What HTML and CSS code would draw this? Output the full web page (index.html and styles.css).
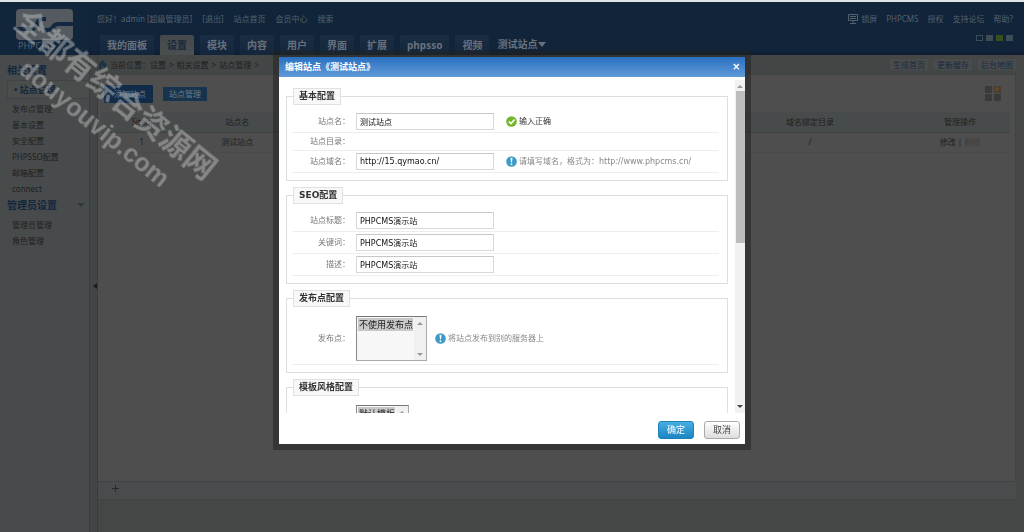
FILE: index.html
```html
<!DOCTYPE html>
<html lang="zh-CN">
<head>
<meta charset="utf-8">
<title>编辑站点</title>
<link rel="stylesheet" href="styles.css">
</head>
<body>
<div class="page">
  <header class="top">
    <div class="logo">
      <svg width="58" height="31" viewBox="0 0 58 31" aria-hidden="true">
        <rect width="57" height="31" rx="4" fill="#545a60"/>
        <path d="M0 20h14c5 0 7-2 7-5s3-5 7-5h2M57 15H43c-3 0-5 1-6 3s-3 3-6 3h-3" fill="none" stroke="#14293f" stroke-width="4"/>
      </svg>
      <span class="logo-text">PHPCMS</span>
    </div>
    <div class="top-main">
      <div class="top-links">
        <div class="link-set user">
          <span>您好！admin [超级管理员]</span>
          <a href="#">[退出]</a>
          <a href="#">站点首页</a>
          <a href="#">会员中心</a>
          <a href="#">搜索</a>
        </div>
        <div class="link-set">
          <a href="#" class="lock"><svg width="10" height="10" viewBox="0 0 10 10" aria-hidden="true"><path d="M.5.5h9v6h-9zM2 2.500h6M2 4.500h6M5 7v2M2 9.500h6" fill="none" stroke="#53616d"/></svg>锁屏</a>
          <a href="#">PHPCMS</a>
          <a href="#">授权</a>
          <a href="#">支持论坛</a>
          <a href="#">帮助?</a>
        </div>
      </div>
      <div class="top-tabs">
        <nav class="tabs">
          <a href="#">我的面板</a>
          <a href="#" class="on">设置</a>
          <a href="#">模块</a>
          <a href="#">内容</a>
          <a href="#">用户</a>
          <a href="#">界面</a>
          <a href="#">扩展</a>
          <a href="#">phpsso</a>
          <a href="#">视频</a>
          <button type="button" class="site">测试站点<i></i></button>
        </nav>
        <div class="skins">
          <button type="button" class="skin s1" aria-label="皮肤一"></button>
          <button type="button" class="skin s2" aria-label="皮肤二"></button>
          <button type="button" class="skin s3" aria-label="皮肤三"></button>
          <button type="button" class="skin s4" aria-label="皮肤四"></button>
        </div>
      </div>
    </div>
  </header>

  <div class="body">
    <aside class="side">
      <h2>相关设置</h2>
      <a href="#" class="current"><i>•</i>站点管理</a>
      <ul>
        <li><a href="#">发布点管理</a></li>
        <li><a href="#">基本设置</a></li>
        <li><a href="#">安全配置</a></li>
        <li><a href="#">PHPSSO配置</a></li>
        <li><a href="#">邮箱配置</a></li>
        <li><a href="#">connect</a></li>
      </ul>
      <h2 class="second">管理员设置<i></i></h2>
      <ul>
        <li><a href="#">管理员管理</a></li>
        <li><a href="#">角色管理</a></li>
      </ul>
    </aside>
    <div class="gutter"><i></i></div>
    <main class="main">
      <div class="crumbs">
        <div class="path">
          <svg width="9" height="9" viewBox="0 0 9 9" aria-hidden="true"><path d="M0 4.500 4.500 0 9 4.500 8 5.500V9H5.500V6h-2v3H1V5.500z" fill="#1f3348"/></svg>
          <span>当前位置：设置</span><span>&gt;</span><span>相关设置</span><span>&gt;</span><span>站点管理</span><span>&gt;</span>
        </div>
        <div class="tools"><a href="#">生成首页</a><a href="#">更新缓存</a><a href="#">后台地图</a></div>
      </div>
      <section class="content">
        <div class="actions">
          <div class="btns"><a href="#" class="add">添加站点</a><a href="#">站点管理</a></div>
          <svg width="17" height="17" viewBox="0 0 17 17" aria-hidden="true"><path d="M0 1h7v7H0zM0 9h7v7H0zM9 9h7v7H9z" fill="#3a3a3a"/><path d="M9 1h7v7H9z" fill="#4b3d30"/><circle cx="12" cy="4" r="2" fill="#624a30"/></svg>
        </div>
        <table class="list">
          <thead><tr><th class="c-id">Siteid</th><th class="c-name">站点名</th><th></th><th class="c-dir">域名绑定目录</th><th class="c-op">管理操作</th></tr></thead>
          <tbody><tr><td>1</td><td>测试站点</td><td></td><td>/</td><td><a href="#">修改</a> | <span class="off">删除</span></td></tr></tbody>
        </table>
      </section>
      <div class="fav"><button type="button" aria-label="添加"></button></div>
      <div class="foot"></div>
    </main>
  </div>
</div>

<div class="overlay">
  <div class="dialog" role="dialog" aria-label="编辑站点">
    <div class="title"><h1>编辑站点《测试站点》</h1><button type="button" aria-label="关闭">×</button></div>
    <div class="view">
      <form class="form" id="site-form">
        <fieldset>
          <legend>基本配置</legend>
          <div class="row"><label for="f-name">站点名：</label><input id="f-name" type="text" value="测试站点">
            <span class="tip ok"><svg width="11" height="11" viewBox="0 0 11 11" aria-hidden="true"><circle cx="5.500" cy="5.500" r="5.300" fill="#74b52c"/><path d="M2.800 5.500 5 7.600 8.500 3.500" fill="none" stroke="#fff" stroke-width="1.600"/></svg>输入正确</span></div>
          <div class="row short"><span class="label">站点目录：</span></div>
          <div class="row"><label for="f-url">站点域名：</label><input id="f-url" type="text" value="http://15.qymao.cn/">
            <span class="tip"><svg width="11" height="11" viewBox="0 0 11 11" aria-hidden="true"><circle cx="5.500" cy="5.500" r="5.300" fill="#3b9bc6"/><path d="M4.500 1.800h2L6 6.600H5zM4.700 7.500h1.600V9H4.700z" fill="#fff"/></svg>请填写域名，格式为：http://www.phpcms.cn/</span></div>
        </fieldset>
        <fieldset>
          <legend>SEO配置</legend>
          <div class="row"><label for="f-title">站点标题：</label><input id="f-title" type="text" value="PHPCMS演示站"></div>
          <div class="row"><label for="f-key">关键词：</label><input id="f-key" type="text" value="PHPCMS演示站"></div>
          <div class="row"><label for="f-desc">描述：</label><input id="f-desc" type="text" value="PHPCMS演示站"></div>
        </fieldset>
        <fieldset>
          <legend>发布点配置</legend>
          <div class="row tall"><label for="f-pub">发布点：</label>
            <div class="listbox"><select id="f-pub" size="3"><option selected>不使用发布点</option></select><div class="bar"><i class="up"></i><i class="down"></i></div></div>
            <span class="tip near"><svg width="11" height="11" viewBox="0 0 11 11" aria-hidden="true"><circle cx="5.500" cy="5.500" r="5.300" fill="#3b9bc6"/><path d="M4.500 1.800h2L6 6.600H5zM4.700 7.500h1.600V9H4.700z" fill="#fff"/></svg>将站点发布到别的服务器上</span></div>
        </fieldset>
        <fieldset>
          <legend>模板风格配置</legend>
          <div class="row tall">
            <div class="listbox narrow"><select aria-label="模板风格" size="3"><option selected>默认模板</option></select><div class="bar"><i class="up"></i><i class="down"></i></div></div></div>
        </fieldset>
      </form>
      <div class="scroll"><i class="up"></i><div class="thumb"></div><i class="down"></i></div>
    </div>
    <div class="buttons"><button type="submit" form="site-form" class="primary">确定</button><button type="button">取消</button></div>
  </div>
</div>
<div class="watermark" aria-hidden="true"><span class="wm-big">全都有综合资源网</span><span class="wm-small">douyouvip.com</span></div>
</body>
</html>
```
FILE: styles.css
```css
* { box-sizing: border-box; }
body { margin: 0; background: #444645; font: 8px/16px "Noto Sans", "Noto Sans CJK SC", sans-serif; color: #202020; overflow: hidden; }
a { color: inherit; text-decoration: none; }
button, input, select { font: inherit; margin: 0; }
button { border: 0; padding: 0; background: none; color: inherit; }
h1, h2, ul { margin: 0; padding: 0; list-style: none; }
i { font-style: normal; }
svg { flex: none; display: block; }

.page { min-height: 100vh; display: flex; flex-direction: column; }
.top { display: flex; height: 55px; border-top: 2px solid #dce5e8; background: linear-gradient(#10243a, #12243a 90%, #0d1c30); color: #56616d; }
.logo { width: 90px; flex: none; padding: 7px 0 0 16px; border-right: 1px solid #0e2034; background: #12263b; }
.logo-text { display: block; font-size: 9px; line-height: 10px; padding: 1px 0 0 2px; }
.top-main { flex: 1; padding: 9px 11px 0 7px; display: flex; flex-direction: column; justify-content: space-between; }
.top-links, .top-tabs, .link-set, .crumbs, .path, .tools, .actions, .btns { display: flex; }
.top-links, .top-tabs, .crumbs, .actions { justify-content: space-between; }
.link-set { gap: 9px; }
.user { gap: 10px; }
.lock { display: flex; align-items: center; gap: 3px; }
.tabs { display: flex; gap: 6px; padding-left: 3px; font-size: 10px; font-weight: bold; line-height: 20px; color: #69717c; }
.tabs a { padding: 0 7px; height: 20px; background: linear-gradient(#1a2e43, #13263c); border-radius: 2px 2px 0 0; }
.tabs a.on { background: linear-gradient(#45494b, #4b4f4f); color: #16283c; }
.site { display: flex; align-items: center; height: 18px; padding-left: 2px; gap: 1px; }
.site i { border: 4px solid transparent; border-top: 5px solid #69717c; border-bottom: 0; }
.skins { display: flex; gap: 3px; }
.skin { width: 7px; height: 6px; }
.s1 { border: 1px solid #3a4d5d; }
.s2 { background: #3f4b53; }
.s3 { background: #36511f; }
.s4 { background: #3c4c58; }

.body { flex: 1; display: flex; }
.side { width: 90px; flex: none; background: #484b4c; border-right: 1px solid #3b3e3e; padding: 5px 0 0; }
.side h2 { font-size: 10px; line-height: 20px; padding-left: 7px; color: #12263c; }
.side .second { display: flex; justify-content: space-between; align-items: center; padding-right: 4px; height: 16px; line-height: 16px; margin-bottom: 4px; }
.second i { border: 4px solid transparent; border-top-color: #303638; border-bottom: 0; }
.current { display: flex; align-items: center; gap: 2px; height: 19px; margin-left: 7px; padding-left: 6px; border: 1px solid #414444; border-right: 0; background: #4b4d4d; font-size: 9px; font-weight: bold; color: #14263a; margin-bottom: 2px; }
.side li { padding-left: 12px; height: 16px; }
.gutter { width: 8px; flex: none; padding-top: 228px; background: #434646; border-right: 1px solid #3a3d3d; }
.gutter i { display: block; border: 3px solid transparent; border-right: 4px solid #1c1c1c; border-left: 0; }
.main { flex: 1; display: flex; flex-direction: column; padding-right: 8px; min-width: 0; background: #444746; }
.crumbs { height: 19px; align-items: center; background: linear-gradient(#454747, #434646); }
.path { align-items: center; gap: 3px; }
.tools { gap: 6px; color: #172c43; line-height: 11px; }
.tools a { padding: 0 3px; background: #4a4b4b; }
.content { flex: 1; background: #4e4e4e; border: 1px solid #414343; border-left: 0; padding: 5px 5px 0 3px; }
.actions { align-items: center; height: 32px; padding: 0 8px 5px 3px; }
.btns { gap: 10px; align-items: center; color: #6b7b88; line-height: 14px; }
.btns a { padding: 0 6px; background: #17344f; border-radius: 1px; }
.btns .add { padding: 2px 7px 2px 10px; background: #112b48; }
.list { width: 100%; table-layout: fixed; border-collapse: collapse; }
.list th, .list td { font-weight: normal; padding: 0; height: 20px; text-align: center; border-bottom: 1px solid #494b4b; }
.list th { background: #484b4b; border-bottom-color: #3f4242; }
.c-id { width: 9%; }
.c-name { width: 12%; }
.c-dir { width: 22%; }
.c-op { width: 11%; }
.off { color: #3d3d3d; }
.fav { height: 18px; padding: 3px 14px; background: #494c4c; border-bottom: 1px solid #404342; }
.fav button { display: block; width: 7px; height: 7px; background: linear-gradient(#292b2b, #292b2b) 3px 0 / 1px 7px no-repeat, linear-gradient(#292b2b, #292b2b) 0 3px / 7px 1px no-repeat; }
.foot { height: 32px; }

.overlay { position: fixed; inset: 0; display: flex; align-items: flex-start; justify-content: center; padding-top: 57px; }
.dialog { width: 466px; background: #fff; box-shadow: 0 0 0 6px rgba(35, 35, 35, .55); font-family: "DejaVu Sans", "Noto Sans CJK SC", sans-serif; color: #333; }
.title { display: flex; align-items: center; justify-content: space-between; height: 20px; padding: 0 5px 0 6px; background: linear-gradient(#2a70c0, #5f9ad9); color: #fff; }
.title h1 { font-size: 9px; }
.title button { width: 8px; font-size: 10px; line-height: 16px; font-weight: bold; }
.view { display: flex; margin-top: 3px; height: 333px; overflow: hidden; }
.form { flex: 1; display: flex; flex-direction: column; gap: 6px; padding: 8px 7px 0; }
fieldset { margin: 0; min-width: 0; padding: 6px 8px 7px 6px; border: 1px solid #dcdfe2; }
legend { height: 17px; padding: 0 5px; border: 1px solid #dfe1e3; background: #f8f8f8; font-size: 9px; font-weight: bold; line-height: 15px; }
.row { display: flex; align-items: center; height: 22px; border-bottom: 1px solid #ebeef0; }
.short { height: 18px; }
.tall { height: 52px; }
.row label, .label { width: 57px; flex: none; text-align: right; color: #777; }
.row input { width: 138px; height: 17px; margin-left: 6px; padding: 0 3px; border: 1px solid #d5d9db; border-top-color: #c4c8ca; background: #fff; color: #111; }
.tip { display: flex; align-items: center; gap: 2px; margin-left: 12px; color: #888; white-space: nowrap; }
.ok { color: #333; }
.near { margin-left: 8px; }
.listbox { display: flex; width: 71px; height: 45px; margin-left: 6px; border: 1px solid #aaa; border-top-color: #777; border-left-color: #888; background: #f7f7f7; }
.listbox select { flex: 1; min-width: 0; height: 43px; padding: 1px 1px; border: 0; outline: 0; background: transparent; overflow: hidden; color: #222; font-size: 9px; }
.listbox option { padding: 0 1px; min-height: 0; height: 13px; line-height: 13px; background: #c8c8c8 linear-gradient(#c8c8c8, #c8c8c8); color: #222; }
.narrow { width: 53px; margin-left: 63px; }
.bar { width: 12px; flex: none; background: #f0f0f0; display: flex; flex-direction: column; align-items: center; justify-content: space-between; padding: 5px 0 4px; }
.up, .down { width: 0; border: 3px solid transparent; }
.up { border-top: 0; border-bottom-color: #999; }
.down { border-bottom: 0; border-top-color: #999; }
.scroll { width: 10px; flex: none; display: flex; flex-direction: column; align-items: center; padding: 5px 0; background: #f1f1f1; }
.scroll .thumb { width: 9px; height: 152px; margin: 3px 0 auto; background: #bdbdbd; }
.scroll .down { border-top-color: #444; }
.buttons { display: flex; justify-content: flex-end; gap: 10px; padding: 8px 5px 5px; }
.buttons button { width: 36px; height: 18px; border: 1px solid #aaa; border-radius: 3px; background: linear-gradient(#fff, #ddd); font-size: 9px; line-height: 14px; color: #444; }
.buttons .primary { border-color: #1c83b8; background: linear-gradient(#46ade0, #1c86c4); color: #fff; }

.watermark { position: absolute; left: 33px; top: 0; transform: rotate(39deg); transform-origin: 0 0; display: flex; flex-direction: column; gap: 4px; color: rgba(190, 190, 190, .5); font-weight: bold; white-space: nowrap; pointer-events: none; }
.wm-big { font-size: 31px; line-height: 38px; font-family: "Noto Sans CJK SC", sans-serif; }
.wm-small { font-size: 25px; line-height: 30px; padding-left: 33px; font-family: "Liberation Sans", sans-serif; }
```
